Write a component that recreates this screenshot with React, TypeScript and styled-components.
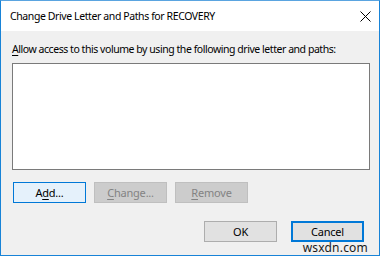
import React from 'react'
import styled, { createGlobalStyle, css } from 'styled-components'

const GlobalStyle = createGlobalStyle`
  html, body {
    margin: 0;
    padding: 0;
    background: #ffffff;
  }
  body {
    font-family: "Noto Sans", "Open Sans", "Liberation Sans", sans-serif;
  }
`

const Window = styled.div`
  position: relative;
  width: 380px;
  height: 256px;
  box-sizing: border-box;
  border: 1px solid #1883d7;
  border-top-color: #5aa4e0;
  display: flex;
  flex-direction: column;
  overflow: hidden;
`

const TitleBar = styled.div`
  height: 30px;
  flex: none;
  background: #ffffff;
  display: flex;
  align-items: center;
  justify-content: space-between;
  padding: 0 4px 0 9px;
`

const Title = styled.span`
  font-size: 10.5px;
  color: #000000;
  letter-spacing: -0.4px;
  white-space: nowrap;
`

const CloseButton = styled.div`
  width: 14px;
  height: 14px;
  margin-right: 3px;
  display: flex;
  align-items: center;
  justify-content: center;
`

const Content = styled.div`
  flex: 1;
  background: #f0f0f0;
  padding: 10px 9px 0 11px;
  display: flex;
  flex-direction: column;
`

const Label = styled.div`
  font-size: 10.5px;
  color: #000000;
  letter-spacing: -0.45px;
  white-space: nowrap;
  height: 16px;
  line-height: 16px;
`

const Key = styled.span`
  text-decoration: underline;
  text-underline-offset: 2px;
`

const ListBox = styled.div`
  margin-top: 6px;
  height: 105px;
  background: #ffffff;
  border: 1px solid #7a7a7a;
`

const ButtonRow = styled.div<{ $end?: boolean; $gap: number; $top: number }>`
  display: flex;
  gap: ${p => p.$gap}px;
  margin-top: ${p => p.$top}px;
  justify-content: ${p => (p.$end ? 'flex-end' : 'flex-start')};
  padding-right: ${p => (p.$end ? '6px' : '0')};
  padding-left: ${p => (p.$end ? '0' : '1px')};
`

type Variant = 'focus' | 'disabled' | 'normal' | 'default'

const Button = styled.div<{ $variant: Variant }>`
  width: 73px;
  height: 21px;
  box-sizing: border-box;
  display: flex;
  align-items: center;
  justify-content: center;
  font-size: 11px;
  letter-spacing: -0.2px;
  background: #e1e1e1;
  border: 1px solid #adadad;
  color: #000000;
  ${p =>
    p.$variant === 'focus' &&
    css`
      background: #e5f1fb;
      border-color: #0078d7;
    `}
  ${p =>
    p.$variant === 'disabled' &&
    css`
      background: #cccccc;
      border-color: #bfbfbf;
      color: #838383;
    `}
  ${p =>
    p.$variant === 'default' &&
    css`
      border: 2px solid #0078d7;
    `}
`

const Watermark = styled.div`
  position: absolute;
  right: 11px;
  bottom: -1px;
  font-size: 12px;
  color: #1a1a1a;
  letter-spacing: 0.2px;
`

export default function App() {
  return (
    <>
      <GlobalStyle />
      <Window>
        <TitleBar>
          <Title>Change Drive Letter and Paths for RECOVERY</Title>
          <CloseButton>
            <svg width="11" height="11" viewBox="0 0 11 11">
              <path d="M0.5 0.5 L10.5 10.5 M10.5 0.5 L0.5 10.5" stroke="#000" strokeWidth="1" />
            </svg>
          </CloseButton>
        </TitleBar>
        <Content>
          <Label>
            <Key>A</Key>llow access to this volume by using the following drive letter and paths:
          </Label>
          <ListBox />
          <ButtonRow $gap={8} $top={12}>
            <Button $variant="focus">
              A<Key>d</Key>d...
            </Button>
            <Button $variant="disabled">
              <Key>C</Key>hange...
            </Button>
            <Button $variant="disabled">
              <Key>R</Key>emove
            </Button>
          </ButtonRow>
          <ButtonRow $end $gap={14} $top={18}>
            <Button $variant="normal">OK</Button>
            <Button $variant="default">Cancel</Button>
          </ButtonRow>
        </Content>
        <Watermark>wsxdn.com</Watermark>
      </Window>
    </>
  )
}
